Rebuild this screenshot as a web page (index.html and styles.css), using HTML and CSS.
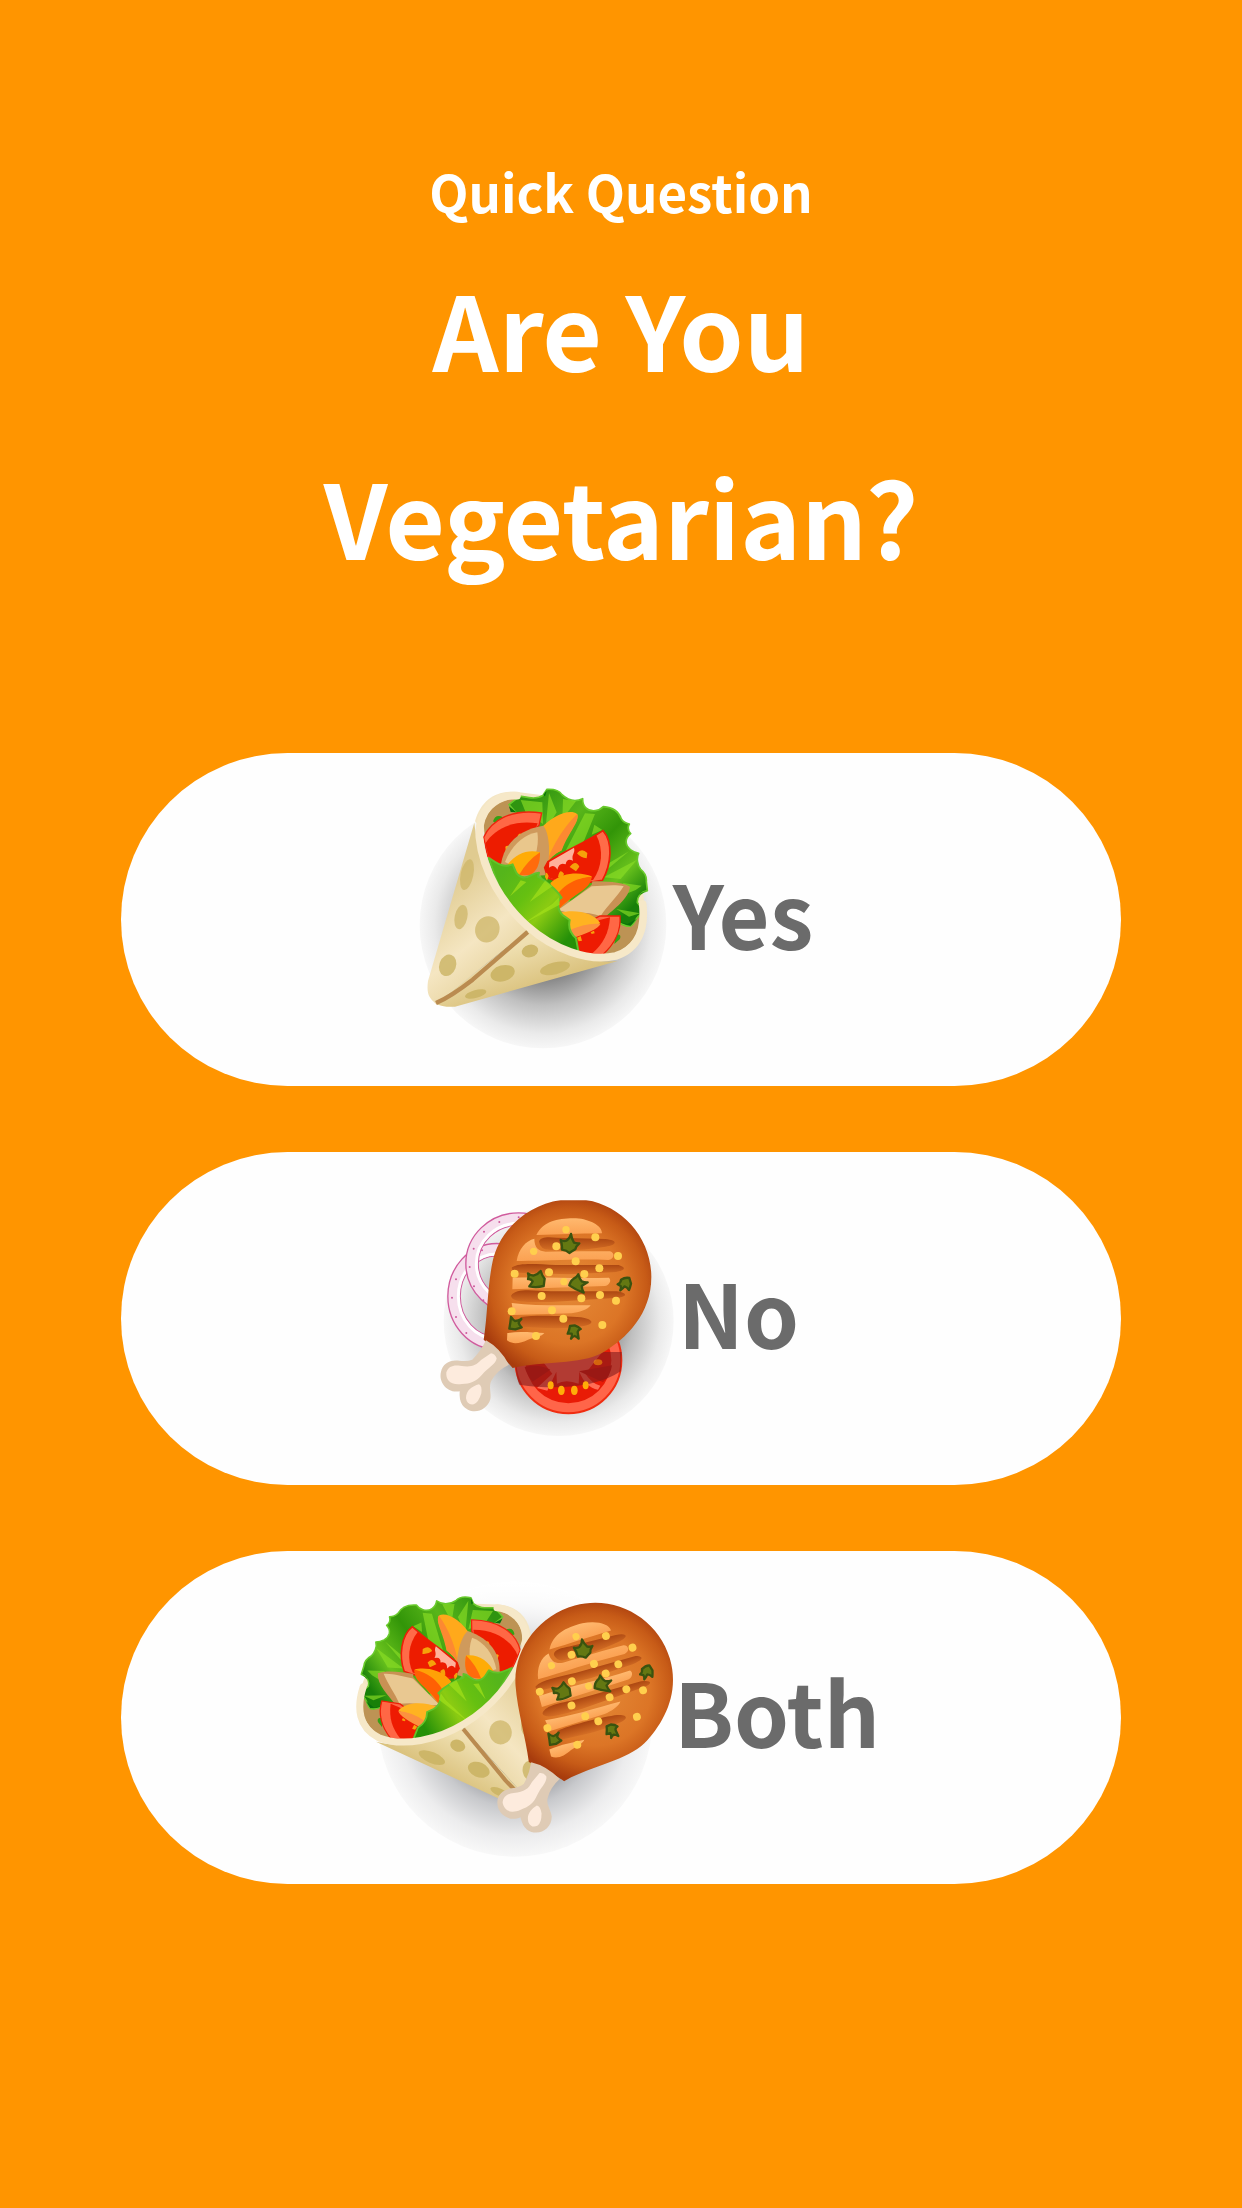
FILE: index.html
```html
<!DOCTYPE html>
<html lang="en">
<head>
<meta charset="utf-8">
<meta name="viewport" content="width=device-width, initial-scale=1">
<title>Quick Question</title>
<link rel="stylesheet" href="styles.css">
</head>
<body>
<main class="screen">
  <header class="question">
    <p class="eyebrow">Quick Question</p>
    <h1 class="title">Are You<br>Vegetarian?</h1>
  </header>

  <div class="answers">
    <button class="answer" type="button">
      <svg class="art art-wrap" viewBox="80 61 732 834" aria-hidden="true">
        <defs>
          <radialGradient id="shade">
            <stop offset="0" stop-color="#404040"/>
            <stop offset=".38" stop-color="#777"/>
            <stop offset=".65" stop-color="#c0c0c0"/>
            <stop offset=".88" stop-color="#eaeaea"/>
            <stop offset="1" stop-color="#f7f7f7"/>
          </radialGradient>
          <linearGradient id="bread" gradientUnits="userSpaceOnUse" x1="130" y1="360" x2="400" y2="700">
            <stop offset="0" stop-color="#e0cb90"/>
            <stop offset=".45" stop-color="#f5e6c2"/>
            <stop offset="1" stop-color="#dcc583"/>
          </linearGradient>
          <linearGradient id="flap" gradientUnits="userSpaceOnUse" x1="300" y1="570" x2="350" y2="710">
            <stop offset="0" stop-color="#efdfb0"/>
            <stop offset="1" stop-color="#d9c07a"/>
          </linearGradient>
          <linearGradient id="leafBack" gradientUnits="userSpaceOnUse" x1="370" y1="120" x2="690" y2="440">
            <stop offset="0" stop-color="#2f9410"/>
            <stop offset=".3" stop-color="#58b51a"/>
            <stop offset=".55" stop-color="#329508"/>
            <stop offset=".8" stop-color="#69c21d"/>
            <stop offset="1" stop-color="#188009"/>
          </linearGradient>
          <linearGradient id="leafFront" gradientUnits="userSpaceOnUse" x1="290" y1="350" x2="500" y2="530">
            <stop offset="0" stop-color="#55b51b"/>
            <stop offset=".35" stop-color="#66c011"/>
            <stop offset=".6" stop-color="#8bcb12"/>
            <stop offset="1" stop-color="#259008"/>
          </linearGradient>
          <radialGradient id="roast" gradientUnits="userSpaceOnUse" cx="450" cy="350" r="285">
            <stop offset="0" stop-color="#e58a37"/>
            <stop offset=".6" stop-color="#dc7526"/>
            <stop offset=".82" stop-color="#c75b17"/>
            <stop offset="1" stop-color="#a83c0d"/>
          </radialGradient>
          <linearGradient id="char" x1="0" y1="0" x2="0" y2="1">
            <stop offset="0" stop-color="#a94410"/>
            <stop offset="1" stop-color="#d56f25"/>
          </linearGradient>
          <linearGradient id="glaze" x1="0" y1="0" x2="0" y2="1">
            <stop offset="0" stop-color="#ffb96f"/>
            <stop offset="1" stop-color="#fba152"/>
          </linearGradient>

          <g id="wrap">
            <path fill="#f4e6c4" d="M218 182C236 116 285 88 345 94L440 106L722 400C732 455 731 520 695 562C665 592 600 601 540 590Z"/>
            <path fill="#bd9354" d="M244 190C250 150 290 118 345 112L720 470C712 520 680 570 620 583L520 570L250 260Z"/>
            <path fill="#35a014" d="M272 182Q280 158 302 170L282 190ZM640 520Q660 520 652 536L636 550Z"/>
            <path fill="url(#leafBack)" stroke="#69ca2c" stroke-width="5" stroke-linejoin="round" d="M320 132L352 106C375 110 402 118 422 104L434 86C455 85 470 88 479 102C497 119 520 124 541 114C540 136 555 153 579 150C590 149 597 144 603 138C630 140 650 154 657 175Q665 187 681 190C674 202 678 211 685 219C665 235 669 254 684 267Q696 276 709 278C701 293 706 316 715 326Q734 341 732 363L735 390C714 395 704 410 705 426Q720 440 718 461C700 465 700 488 685 496C665 501 650 482 635 479L430 390L340 155Z"/>
            <g fill="#8bdd25" opacity=".65">
              <path d="M355 118L420 125L422 190L370 155ZM440 97L463 155L429 210ZM482 115L521 122L480 175ZM548 158L578 160L535 265L490 270ZM576 192L568 222L600 208ZM680 272L615 310L610 330ZM703 298L604 350L655 355ZM662 367L718 375L700 388L670 400ZM642 445L713 458L680 468Z"/>
            </g>
            <path fill="#08710b" d="M320 137L342 155L325 154ZM423 103L434 87L428 107ZM710 404L733 390L717 397ZM635 480L685 495L703 475L675 490Z"/>
            <path fill="#ff6845" stroke="#ed260e" stroke-width="4" d="M244 230C266 180 326 143 418 157L410 194L290 311L256 288Z"/>
            <path fill="#ed1c00" d="M249 248C276 207 330 176 406 188L375 274L290 311L258 286Z"/>
            <path fill="#ffa91b" d="M405 214C450 162 503 144 524 160C535 180 490 220 478 269Q450 283 433 307Z"/>
            <path fill="#fd8931" d="M433 307C455 239 499 184 525 160C532 184 503 208 478 269Q451 282 433 307Z"/>
            <path fill="#fba914" d="M346 225Q354 211 362 227L352 239ZM309 258Q318 250 324 264L311 276Z"/>
            <path fill="#cf9a5c" d="M296 311C303 257 344 207 423 195C445 222 445 301 428 344L365 347Z"/>
            <path fill="#e9c78c" d="M308 304C326 257 365 221 405 215C413 263 390 311 376 337Z"/>
            <path fill="#ffac06" d="M310 319C337 281 374 264 413 275C415 318 386 344 354 345Z"/>
            <path fill="#ff6b0c" d="M350 343Q376 299 413 275Q414 326 383 344Z"/>
            <path fill="#ff6b48" stroke="#ed1d07" stroke-width="5" d="M427 321L437 303C500 265 550 245 602 210C632 244 628 310 600 359L500 375L437 352Z"/>
            <path fill="#ed1c00" d="M427 320L437 302L582 224C605 268 599 320 572 358L500 373L438 350Z"/>
            <path fill="#ffb19a" d="M441 304L515 261C520 278 506 280 512 300Q493 291 490 311Q470 303 465 327Q455 309 440 321Z"/>
            <g fill="#f6a10a">
              <path d="M524 278Q538 260 555 277L553 293Q535 292 524 278ZM502 319Q520 296 531 318L521 332ZM467 349Q472 320 485 339L480 354ZM428 349Q430 325 439 346L434 360Z"/>
            </g>
            <path fill="#ffa106" d="M444 367C487 328 545 337 568 347C565 376 520 397 467 448Z"/>
            <path fill="#ff6004" d="M467 398C501 356 545 350 568 348C564 392 510 397 467 449Z"/>
            <path fill="#c99154" d="M568 372L570 362C609 363 653 362 683 378C679 414 638 442 603 474L474 446Z"/>
            <path fill="#e9c891" d="M467 448L568 377C601 376 637 370 664 377C643 410 618 432 595 466Q550 452 500 457Z"/>
            <path fill="#ff6745" stroke="#ed1f07" stroke-width="4" d="M593 466L653 466C657 514 632 555 601 582L528 576L500 513Z"/>
            <path fill="#ee1b02" d="M592 478L623 470C620 518 602 550 570 578L526 574L501 527Z"/>
            <path fill="#f8a20b" d="M524 531L535 526L539 540L529 542ZM565 515L575 510L577 518L568 520Z"/>
            <path fill="#ffb321" d="M470 457C517 445 575 455 594 488Q542 506 497 530L490 480Z"/>
            <path fill="#fc913f" d="M496 511Q553 485 594 490Q585 510 504 534Z"/>
            <path fill="url(#leafFront)" stroke="#61c32a" stroke-width="6" stroke-linejoin="round" d="M259 292C286 307 298 323 331 311C339 328 340 344 359 349C381 357 389 335 410 336L407 348C430 360 463 387 478 411C463 418 464 450 483 465L502 478C497 500 506 520 521 533L529 576C485 567 418 536 373 507L302 415Z"/>
            <path fill="#a2df19" opacity=".7" d="M323 407L355 359L372 364ZM382 424L428 360L450 377ZM360 491L450 430L470 410L472 432Z"/>
            <path fill="url(#bread)" d="M216 186C225 290 300 440 378 510L100 729C80 712 72 700 77 661Z"/>
            <path fill="url(#flap)" d="M380 509C440 567 550 610 646 601L158 738Q120 740 100 729Z"/>
            <path fill="none" stroke="#f6e8c8" stroke-width="23" stroke-linecap="round" d="M344 105C274 100 227 154 231 229C242 336 304 433 376 497C450 563 555 605 640 586C711 563 729 500 721 430"/>
            <path fill="none" stroke="#ba8b50" stroke-width="13" d="M376 514L211 657Q145 708 101 727"/>
            <g fill="#cdb668">
              <ellipse cx="194" cy="342" rx="19" ry="47" transform="rotate(12 194 342)" opacity=".75"/>
              <ellipse cx="176" cy="469" rx="19" ry="37" transform="rotate(12 176 469)" opacity=".75"/>
              <ellipse cx="255" cy="506" rx="36" ry="40" transform="rotate(25 255 506)" opacity=".75"/>
              <ellipse cx="136" cy="614" rx="25" ry="33" transform="rotate(20 136 614)" opacity=".85"/>
              <ellipse cx="383" cy="571" rx="25" ry="19" transform="rotate(-15 383 571)"/>
              <ellipse cx="301" cy="638" rx="37" ry="24" transform="rotate(-15 301 638)"/>
              <ellipse cx="458" cy="623" rx="46" ry="18" transform="rotate(-14 458 623)"/>
              <ellipse cx="220" cy="700" rx="33" ry="12" transform="rotate(-15 220 700)"/>
            </g>
          </g>

          <g id="drumstick">
            <path fill="url(#roast)" d="M195 508C207 434 206 347 222 273C246 164 350 86 465 86C594 86 698 192 698 320C698 430 624 505 550 548C484 584 373 571 282 593Q244 548 195 508Z"/>
            <g fill="url(#char)">
              <path d="M361 214C365 198 391 200 414 202L560 206C600 210 595 224 561 229C500 237 450 245 392 238Q365 238 361 214Z"/>
              <path d="M280 291C305 276 355 282 411 284L600 284C627 293 618 302 582 306L451 312L315 308Q275 306 280 291Z"/>
              <path d="M277 376C294 352 346 362 397 363L594 363C625 367 628 379 600 382L398 395C333 395 280 398 277 376Z"/>
              <path d="M306 440C347 433 434 436 487 441C528 447 529 464 489 468C421 479 354 470 292 469Z"/>
            </g>
            <g fill="url(#glaze)">
              <path d="M353 194C376 151 419 143 472 144C514 147 550 166 550 189C475 190 426 193 353 194Z"/>
              <path d="M294 272C300 236 321 211 347 205C347 232 360 242 381 244C451 243 517 242 574 243C590 248 587 267 569 269C464 265 367 273 294 272Z"/>
              <path d="M282 322C378 319 477 326 571 322C580 331 571 345 558 347L281 357Z"/>
              <path d="M279 398C359 408 436 404 516 405C508 418 480 426 459 429L285 434Z"/>
              <path d="M266 488C306 482 341 487 377 488C369 500 342 502 328 508C306 519 282 524 265 510Z"/>
            </g>
            <g fill="#ffcf4d">
              <circle cx="442" cy="178" r="11"/><circle cx="530" cy="201" r="12"/><circle cx="413" cy="228" r="12"/><circle cx="345" cy="243" r="11"/><circle cx="598" cy="257" r="12"/><circle cx="471" cy="273" r="12"/><circle cx="542" cy="294" r="12"/><circle cx="288" cy="310" r="12"/><circle cx="391" cy="306" r="12"/><circle cx="497" cy="311" r="12"/><circle cx="436" cy="334" r="11"/><circle cx="369" cy="377" r="12"/><circle cx="488" cy="384" r="12"/><circle cx="544" cy="374" r="12"/><circle cx="592" cy="391" r="12"/><circle cx="279" cy="423" r="12"/><circle cx="400" cy="420" r="12"/><circle cx="434" cy="445" r="12"/><circle cx="551" cy="464" r="12"/><circle cx="352" cy="497" r="12"/>
            </g>
            <path fill="#647812" stroke="#3a530f" stroke-width="7" stroke-linejoin="round" d="M426 209Q436 214 443 211Q454 204 457 191Q459 206 466 217Q475 220 482 219Q472 227 470 237Q461 242 452 248Q444 240 430 238Q431 222 426 209ZM328 309Q339 317 346 315Q358 312 366 302Q370 316 378 325L375 347Q353 353 332 348Q339 340 342 333Q337 325 328 326Q331 317 328 309ZM479 312Q482 325 489 333Q499 337 507 336Q496 342 489 347Q490 358 495 367Q472 359 452 345Q456 330 465 325Q475 321 479 312ZM597 342Q607 337 607 328Q620 320 632 323L637 340Q634 352 631 359Q625 350 618 348Q613 354 605 360Q608 353 606 347ZM277 440Q283 449 289 452Q299 451 308 446Q301 452 300 458Q303 466 309 471L290 477L272 475Q275 459 277 440ZM454 467L468 465Q480 469 486 476Q478 479 477 485L480 505Q474 499 468 497Q462 499 457 505Q461 496 459 490L447 490Q452 479 454 467Z"/>
            <path fill="#dfcbb5" d="M202 510Q244 533 271 583Q235 600 218 631C209 650 219 668 215 687C204 725 155 736 131 704Q121 690 123 663C83 669 59 633 67 604C72 579 94 567 122 571Q146 574 161 568Q185 545 202 510Z"/>
            <path fill="#fdebdd" d="M217 549Q229 550 234 564C232 582 210 590 190 613C173 633 155 640 130 641C95 646 81 629 83 606C89 588 104 583 124 586C157 592 171 586 187 569ZM181 642Q191 647 188 669Q180 697 165 702Q145 705 142 684C142 660 160 648 181 642Z"/>
          </g>
          <clipPath id="flatTop"><path d="M0 90H900V900H0Z"/></clipPath>
        </defs>
        <circle cx="422" cy="493" r="370" fill="url(#shade)"/>
        <use href="#wrap"/>
      </svg>
      <span class="label">Yes</span>
    </button>

    <button class="answer" type="button">
      <svg class="art art-meat" viewBox="73 29 705 834" aria-hidden="true">
        <circle cx="420" cy="452" r="345" fill="url(#shade)"/>
        <g fill="none">
          <ellipse cx="234" cy="378" rx="128" ry="140" stroke="#d05b9d" stroke-width="41"/>
          <ellipse cx="234" cy="378" rx="128" ry="140" stroke="#f6dfed" stroke-width="33"/>
          <ellipse cx="234" cy="378" rx="115" ry="127" stroke="#fff" stroke-width="9"/>
          <ellipse cx="300" cy="280" rx="140" ry="134" stroke="#d05b9d" stroke-width="41"/>
          <ellipse cx="300" cy="280" rx="140" ry="134" stroke="#f6dfed" stroke-width="33"/>
          <ellipse cx="300" cy="280" rx="127" ry="121" stroke="#fff" stroke-width="9"/>
        </g>
        <g fill="#cf5a9d">
          <circle cx="300" cy="141" r="3"/><circle cx="242" cy="155" r="3"/><circle cx="196" cy="184" r="3"/><circle cx="165" cy="235" r="3"/><circle cx="153" cy="290" r="3"/><circle cx="166" cy="348" r="3"/><circle cx="194" cy="390" r="3"/><circle cx="112" cy="327" r="3"/><circle cx="100" cy="382" r="3"/><circle cx="112" cy="440" r="3"/><circle cx="143" cy="488" r="3"/><circle cx="190" cy="240" r="3"/>
        </g>
        <circle cx="449" cy="570" r="159" fill="#ff6549" stroke="#f02c10" stroke-width="6"/>
        <circle cx="449" cy="570" r="129" fill="#e91b06"/>
        <path fill="#ff6d55" d="M330 520H570L500 610Q520 640 545 646L538 658Q500 650 482 604L480 640Q440 625 415 640L413 604L386 661L355 653L401 610Z"/>
        <path fill="#e91b06" d="M390 655C394 638 414 636 425 648Q437 634 450 646Q468 634 480 648Q501 636 510 655L480 680H415Z"/>
        <path fill="#c41509" d="M318 590Q360 580 395 598L342 634Q324 614 318 590ZM481 603L580 585Q576 615 553 636Z"/>
        <path fill="#7e1a1c" opacity=".6" d="M288 545H609L606 603C540 648 424 661 302 643Q290 617 288 545Z"/>
        <g fill="#ffad08"><ellipse cx="396" cy="645" rx="9" ry="12"/><ellipse cx="428" cy="660" rx="10" ry="14"/><ellipse cx="467" cy="660" rx="10" ry="14"/><ellipse cx="501" cy="645" rx="9" ry="12"/><ellipse cx="538" cy="576" rx="13" ry="9" opacity=".5"/></g>
        <g clip-path="url(#flatTop)"><use href="#drumstick"/></g>
      </svg>
      <span class="label">No</span>
    </button>

    <button class="answer" type="button">
      <svg class="art art-both" viewBox="66 29 936 834" aria-hidden="true">
        <defs>
          <radialGradient id="shadeCool">
            <stop offset="0" stop-color="#55575d"/>
            <stop offset=".4" stop-color="#85878d"/>
            <stop offset=".64" stop-color="#c8c9cc"/>
            <stop offset=".85" stop-color="#ececed"/>
            <stop offset="1" stop-color="#f8f8f8"/>
          </radialGradient>
          <linearGradient id="fade" x1="0" y1="0" x2="0" y2="1">
            <stop offset="0" stop-color="#fff"/>
            <stop offset=".35" stop-color="#fff" stop-opacity="0"/>
          </linearGradient>
        </defs>
        <circle cx="525" cy="450" r="412" fill="url(#shadeCool)"/>
        <circle cx="525" cy="450" r="414" fill="url(#fade)"/>
        <use href="#wrap" transform="matrix(-.913 -.146 -.177 .9 804 71)"/>
        <use href="#drumstick" transform="matrix(.945 -.265 .278 .943 241 151)"/>
      </svg>
      <span class="label">Both</span>
    </button>
  </div>
</main>
</body>
</html>
```
FILE: styles.css
```css
* {
  box-sizing: border-box;
}

body {
  margin: 0;
  min-height: 100vh;
  background: #ff9500;
  color: #fff;
  font-family: "Noto Sans CJK SC", "Noto Sans", sans-serif;
  font-weight: 700;
}

.screen {
  padding: 148px 121px;
}

.question {
  text-align: center;
}

.eyebrow {
  margin: 0;
  font-size: 51px;
  line-height: 86px;
}

.title {
  margin: 0;
  font-size: 103px;
  font-weight: 700;
  line-height: 188px;
}

.answers {
  display: flex;
  flex-direction: column;
  gap: 66px;
  margin-top: 143px;
}

.answer {
  display: flex;
  align-items: center;
  justify-content: center;
  width: 100%;
  min-height: 333px;
  padding: 0;
  border: 0;
  border-radius: 167px;
  background: #fefefe;
  color: #6b6b6b;
  font: inherit;
  font-size: 88px;
  line-height: 120px;
  cursor: pointer;
}

.label {
  padding-bottom: 16px;
}

.art {
  flex: none;
  height: 278px;
  overflow: visible;
}

.art-wrap {
  width: 244px;
}

.art-meat {
  width: 235px;
}

.art-both {
  width: 312px;
}
```
